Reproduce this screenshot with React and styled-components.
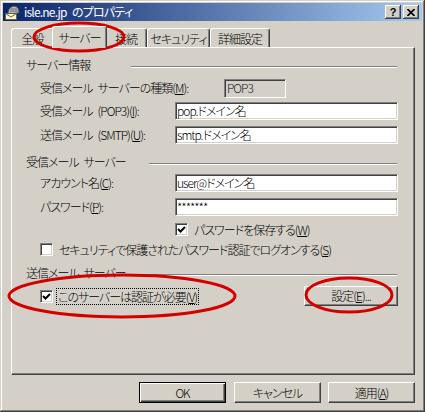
import React from "react";
import styled, { createGlobalStyle } from "styled-components";

const GlobalStyle = createGlobalStyle`
  body {
    margin: 0;
    background: #d4d0c8;
  }
  * {
    box-sizing: border-box;
  }
`;

const Window = styled.div`
  position: relative;
  width: 425px;
  height: 412px;
  padding: 3px;
  background: #d4d0c8;
  box-shadow: inset -1px -1px #404040, inset 1px 1px #d4d0c8,
    inset -2px -2px #808080, inset 2px 2px #fff;
  font-family: "Noto Sans CJK JP", "Noto Sans", sans-serif;
  font-size: 12px;
  font-weight: 300;
  letter-spacing: -1px;
  line-height: 16px;
  font-feature-settings: "palt";
  color: #000;
  display: flex;
  flex-direction: column;
`;

const TitleBar = styled.div`
  height: 18px;
  display: flex;
  align-items: center;
  padding: 0 3px 0 1px;
  background: linear-gradient(90deg, #0a246a, #a6caf0);
  color: #fff;
`;

const TitleText = styled.div`
  flex: 1;
  margin-left: 4px;
  white-space: nowrap;
  font-weight: 400;
  letter-spacing: -0.8px;
`;

const CaptionButtons = styled.div`
  display: flex;
  gap: 2px;
`;

const CaptionButton = styled.div`
  width: 16px;
  height: 14px;
  display: flex;
  align-items: center;
  justify-content: center;
  background: #d4d0c8;
  color: #000;
  font-family: "Liberation Sans", sans-serif;
  font-weight: bold;
  font-size: 11px;
  letter-spacing: 0;
  box-shadow: inset -1px -1px #404040, inset 1px 1px #fff,
    inset -2px -2px #808080;
`;

const Body = styled.div`
  display: flex;
  flex-direction: column;
  padding: 5px 7px 0 8px;
`;

const TabStrip = styled.div`
  display: flex;
  align-items: flex-end;
  height: 21px;
`;

const Tab = styled.div`
  position: relative;
  z-index: ${(p) => (p.$active ? 1 : 0)};
  width: ${(p) => p.$w}px;
  height: ${(p) => (p.$active ? 22 : 19)}px;
  margin: ${(p) => (p.$active ? "0 -2px -1px" : "0")};
  padding-top: ${(p) => (p.$active ? 3 : 2)}px;
  text-align: center;
  background: #d4d0c8;
  border-top: 1px solid #fff;
  border-left: 1px solid #fff;
  border-right: 1px solid #404040;
  border-radius: 3px 3px 0 0;
  box-shadow: inset -1px 0 #808080;
  white-space: nowrap;
`;

const Panel = styled.div`
  width: 404px;
  height: 328px;
  display: flex;
  flex-direction: column;
  padding: 9px 16px 0 14px;
  border-top: 1px solid #fff;
  border-left: 1px solid #fff;
  border-right: 1px solid #404040;
  border-bottom: 1px solid #404040;
  box-shadow: inset -1px -1px #808080;
`;

const Header = styled.div`
  display: flex;
  align-items: center;
  height: 16px;
  margin-top: ${(p) => p.$mt || 0}px;
`;

const HeaderLabel = styled.div`
  width: ${(p) => p.$w}px;
  white-space: nowrap;
`;

const HeaderLine = styled.div`
  flex: 1;
  margin: 3px 1px 0 0;
  border-top: 1px solid #808080;
  border-bottom: 1px solid #fff;
`;

const Row = styled.div`
  display: flex;
  align-items: center;
  height: 20px;
  padding-left: 14px;
  margin-top: ${(p) => p.$mt || 0}px;
  justify-content: ${(p) => (p.$spread ? "space-between" : "flex-start")};
`;

const RowLabel = styled.div`
  width: ${(p) => p.$w || 135}px;
  white-space: nowrap;
`;

const TextBox = styled.div`
  flex: 1;
  height: 18px;
  padding: 0 1px;
  line-height: 15px;
  background: #fff;
  border: 1px solid;
  border-color: #808080 #fff #fff #808080;
  box-shadow: inset 1px 1px #404040, inset -1px -1px #d4d0c8;
  white-space: nowrap;
`;

const StaticBox = styled.div`
  width: 62px;
  height: 19px;
  padding: 0 2px;
  line-height: 16px;
  border: 1px solid;
  border-color: #808080 #fff #fff #808080;
  box-shadow: inset 1px 1px #404040;
  color: #222;
`;

const CheckField = styled.div`
  display: flex;
  align-items: center;
  margin-left: ${(p) => p.$ml || 0}px;
`;

const CheckBox = styled.div`
  width: 13px;
  height: 13px;
  display: flex;
  align-items: center;
  justify-content: center;
  background: #fff;
  border: 1px solid;
  border-color: #808080 #fff #fff #808080;
  box-shadow: inset 1px 1px #404040, inset -1px -1px #d4d0c8;
`;

const CheckText = styled.div`
  margin-left: ${(p) => (p.$focus ? 3 : 4)}px;
  padding: 0 1px;
  height: 17px;
  line-height: 15px;
  border: 1px dotted ${(p) => (p.$focus ? "#000" : "transparent")};
  white-space: nowrap;
`;

const Button = styled.div`
  width: ${(p) => p.$w || 87}px;
  height: ${(p) => p.$h || 21}px;
  display: flex;
  align-items: center;
  justify-content: center;
  background: #d4d0c8;
  border: 1px solid;
  border-color: ${(p) =>
    p.$default ? "#000" : "#fff #404040 #404040 #fff"};
  box-shadow: ${(p) =>
    p.$default
      ? "inset 1px 1px #fff, inset -1px -1px #404040, inset -2px -2px #808080"
      : "inset -1px -1px #808080"};
  white-space: nowrap;
`;

const ButtonBar = styled.div`
  display: flex;
  justify-content: flex-end;
  gap: 7px;
  margin-top: 7px;
`;

const Overlay = styled.svg`
  position: absolute;
  left: 0;
  top: 0;
  pointer-events: none;
`;

const TitleIcon = () => (
  <svg width="16" height="16" viewBox="0 0 16 16">
    <path d="M4 8 Q5 2 11 2 Q15 3 15 7 L15 9 L4 10 Z" fill="#b8b8b8" stroke="#404040" strokeWidth="1" />
    <path d="M6 5 H13 M6 7 H14" stroke="#707070" strokeWidth="1" />
    <rect x="1.5" y="9.5" width="11" height="6" fill="#fff8c0" stroke="#606060" />
    <path d="M1.5 9.5 L7 13 L12.5 9.5" fill="none" stroke="#606060" />
  </svg>
);

const Check = () => (
  <svg width="9" height="9" viewBox="0 0 9 9">
    <polyline points="1,4 3.5,6.5 8,2" fill="none" stroke="#000" strokeWidth="2" />
  </svg>
);

const tabs = [
  { label: "全般", w: 43 },
  { label: "サーバー", w: 51, active: true },
  { label: "接続", w: 42 },
  { label: "セキュリティ", w: 63 },
  { label: "詳細設定", w: 60 },
];

export default function App() {
  return (
    <Window>
      <GlobalStyle />
      <TitleBar>
        <TitleIcon />
        <TitleText>isle.ne.jp{"\u2002"}のプロパティ</TitleText>
        <CaptionButtons>
          <CaptionButton>?</CaptionButton>
          <CaptionButton>
            <svg width="8" height="7" viewBox="0 0 8 7">
              <path d="M0.5 0 L7.5 7 M7.5 0 L0.5 7" stroke="#000" strokeWidth="1.6" />
            </svg>
          </CaptionButton>
        </CaptionButtons>
      </TitleBar>

      <Body>
        <TabStrip>
          {tabs.map((t) => (
            <Tab key={t.label} $w={t.active ? t.w + 4 : t.w} $active={t.active}>
              {t.label}
            </Tab>
          ))}
        </TabStrip>

        <Panel>
          <Header>
            <HeaderLabel $w={105}>サーバー情報</HeaderLabel>
            <HeaderLine />
          </Header>
          <Row $mt={5}>
            <RowLabel $w={184}>
              受信メール{"\u2002"}サーバーの種類(<u>M</u>):
            </RowLabel>
            <StaticBox>POP3</StaticBox>
          </Row>
          <Row $mt={3}>
            <RowLabel>
              受信メール{"\u2002"}(POP3)(<u>I</u>):
            </RowLabel>
            <TextBox>pop.ドメイン名</TextBox>
          </Row>
          <Row $mt={4}>
            <RowLabel>
              送信メール{"\u2002"}(SMTP)(<u>U</u>):
            </RowLabel>
            <TextBox>smtp.ドメイン名</TextBox>
          </Row>

          <Header $mt={9}>
            <HeaderLabel $w={123}>受信メール{"\u2002"}サーバー</HeaderLabel>
            <HeaderLine />
          </Header>
          <Row $mt={3}>
            <RowLabel>
              アカウント名(<u>C</u>):
            </RowLabel>
            <TextBox>user@ドメイン名</TextBox>
          </Row>
          <Row $mt={4}>
            <RowLabel>
              パスワード(<u>P</u>):
            </RowLabel>
            <TextBox>*******</TextBox>
          </Row>
          <Row $mt={2}>
            <CheckField $ml={135}>
              <CheckBox>
                <Check />
              </CheckBox>
              <CheckText>
                パスワードを保存する(<u>W</u>)
              </CheckText>
            </CheckField>
          </Row>
          <Row>
            <CheckField>
              <CheckBox />
              <CheckText>
                セキュリティで保護されたパスワード認証でログオンする(<u>S</u>)
              </CheckText>
            </CheckField>
          </Row>

          <Header $mt={6}>
            <HeaderLabel $w={123}>送信メール{"\u2002"}サーバー</HeaderLabel>
            <HeaderLine />
          </Header>
          <Row $mt={5} $spread>
            <CheckField>
              <CheckBox>
                <Check />
              </CheckBox>
              <CheckText $focus>
                このサーバーは認証が必要(<u>V</u>)
              </CheckText>
            </CheckField>
            <Button $w={94} $h={20}>
              設定(<u>E</u>)...
            </Button>
          </Row>
        </Panel>

        <ButtonBar>
          <Button $default style={{ marginRight: 1 }}>
            OK
          </Button>
          <Button>キャンセル</Button>
          <Button>
            適用(<u>A</u>)
          </Button>
        </ButtonBar>
      </Body>

      <Overlay width="425" height="412" viewBox="0 0 425 412">
        <g fill="none" stroke="#d40000" strokeWidth="3">
          <ellipse cx="79" cy="37" rx="45" ry="14" />
          <ellipse cx="122" cy="296" rx="113" ry="21" />
          <ellipse cx="349" cy="295" rx="43" ry="17" />
        </g>
      </Overlay>
    </Window>
  );
}
